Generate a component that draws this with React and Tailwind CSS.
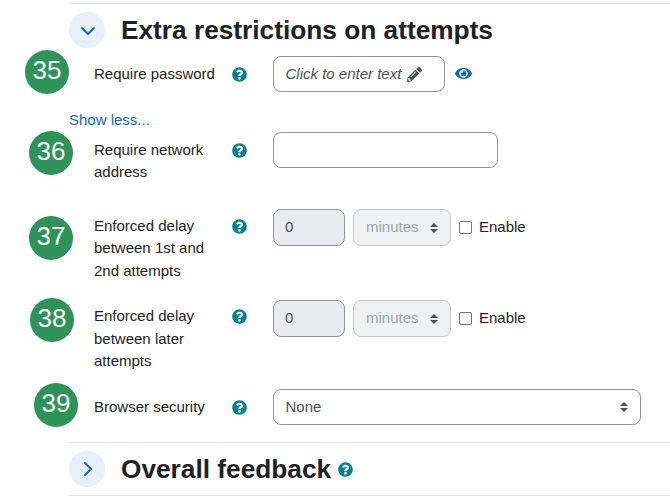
import React from 'react';
import { FaPencilAlt, FaEye, FaQuestionCircle } from 'react-icons/fa';

const Badge = ({ n, cls }) => (
  <div className={`absolute w-[44px] h-[44px] rounded-full bg-[#2e9359] text-white text-[26px] leading-[40px] text-center ${cls}`}>{n}</div>
);

const Help = ({ cls = '' }) => <FaQuestionCircle className={`text-[#008196] text-[15px] shrink-0 ${cls}`} />;

const Updown = ({ fill = '#495057' }) => (
  <svg width="8" height="10" viewBox="0 0 8 10" className="shrink-0">
    <path d="M4 0 L8 4 L0 4 Z M4 10 L0 6 L8 6 Z" fill={fill} />
  </svg>
);

const Chevron = ({ right }) => (
  <div className="w-[36px] h-[36px] rounded-full bg-[#e7eff8] flex items-center justify-center shrink-0">
    <svg width="18" height="16" viewBox="0 0 18 16" fill="none" stroke="#0f6cbf" strokeWidth="2" strokeLinecap="round" strokeLinejoin="round">
      {right ? <path d="M7 2 L13 8 L7 14" /> : <path d="M4 6 L10 12 L16 6" />}
    </svg>
  </div>
);

const Row = ({ label, labelCls = '', helpCls = '', children, cls = '' }) => (
  <div className={`flex ${cls}`}>
    <div className={`w-[163px] pl-[25px] pr-[13px] text-[#1d2125] leading-[22.5px] shrink-0 ${labelCls}`}>{label}</div>
    <div className="w-[41px] shrink-0"><Help cls={helpCls} /></div>
    <div className="flex items-start">{children}</div>
  </div>
);

const Delay = () => (
  <>
    <div className="w-[72px] h-[37px] rounded-lg border border-[#8f959e] bg-[#e9ecef] text-[#495057] pl-[11px] flex items-center">0</div>
    <div className="ml-[8px] w-[98px] h-[37px] rounded-lg border border-[#c3c6cb] bg-[#f0f1f3] text-[#a0a4a9] pl-[12px] pr-[12px] flex items-center justify-between">
      minutes<Updown />
    </div>
    <label className="ml-[8px] h-[36px] flex items-center text-[#1d2125]">
      <span className="w-[13px] h-[13px] rounded-[2px] border border-[#767676] bg-white mr-[7px]" />
      Enable
    </label>
  </>
);

export default function App() {
  return (
    <div className="relative w-[670px] h-[499px] overflow-hidden bg-white pl-[69px] pt-[3px] text-[15px] font-['Liberation_Sans',Arial,sans-serif]">
      <div className="border-t border-[#dee2e6] pt-[8px] flex items-center">
        <Chevron />
        <h3 className="ml-[16px] text-[26.25px] leading-[36px] font-bold text-[#1d2125]">Extra restrictions on attempts</h3>
      </div>

      <Row cls="mt-[8px]" labelCls="pt-[7px]" helpCls="mt-[11px]" label="Require password">
        <div className="w-[172px] h-[36px] rounded-lg border border-[#8f959e] pl-[11.5px] flex items-center italic text-[#495057]">
          Click to enter text
          <FaPencilAlt className="ml-[6px] text-[15px]" />
        </div>
        <FaEye className="ml-[10px] mt-[9px] text-[#0f6cbf] text-[17px]" />
      </Row>

      <a className="block mt-[17px] leading-[22px] text-[#0f6cbf]">Show less...</a>

      <Row cls="mt-[1px]" labelCls="pt-[6.5px]" helpCls="mt-[11px]" label="Require network address">
        <div className="w-[225px] h-[36px] rounded-lg border border-[#8f959e]" />
      </Row>

      <Row cls="mt-[25.5px]" labelCls="pt-[5.5px]" helpCls="mt-[10px]" label="Enforced delay between 1st and 2nd attempts">
        <Delay />
      </Row>

      <Row cls="mt-[18px]" labelCls="pt-[5px]" helpCls="mt-[9px]" label="Enforced delay between later attempts">
        <Delay />
      </Row>

      <Row cls="mt-[16.5px]" labelCls="pt-[7px]" helpCls="mt-[11px]" label="Browser security">
        <div className="w-[368px] h-[36px] rounded-lg border border-[#8f959e] pl-[11.5px] pr-[12px] flex items-center justify-between text-[#495057]">
          None<Updown />
        </div>
      </Row>

      <div className="mt-[17px] border-t border-b border-[#dee2e6] pt-[8px] pb-[8px] flex items-center">
        <Chevron right />
        <h3 className="ml-[16px] text-[26.25px] leading-[36px] font-bold text-[#1d2125]">Overall feedback</h3>
        <Help cls="ml-[7px] mt-[1px]" />
      </div>

      <Badge n="35" cls="left-[25px] top-[50px]" />
      <Badge n="36" cls="left-[29px] top-[131px]" />
      <Badge n="37" cls="left-[29px] top-[216px]" />
      <Badge n="38" cls="left-[30px] top-[298px]" />
      <Badge n="39" cls="left-[34px] top-[383px]" />
    </div>
  );
}
